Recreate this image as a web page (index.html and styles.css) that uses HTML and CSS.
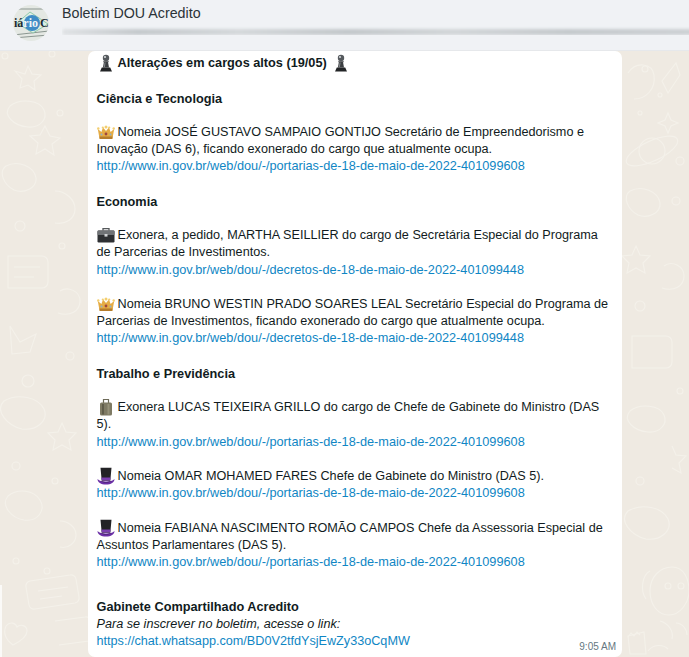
FILE: index.html
```html
<!DOCTYPE html>
<html lang="pt">
<head>
<meta charset="utf-8">
<title>Boletim DOU Acredito</title>
<link rel="stylesheet" href="styles.css">
</head>
<body>
<svg width="0" height="0" class="defs">
  <defs>
    <symbol id="pawn" viewBox="0 0 18 18">
      <circle cx="9" cy="4" r="3.200" fill="#55595d"/>
      <circle cx="8" cy="3" r="1.100" fill="#d0d4d7"/>
      <path d="M6 7.200h6l-.9 1.200.9 5.100H5.900l.9-5.100z" fill="#3c3f42"/>
      <path d="M7.600 8.500h1l-.7 4.500H6.700z" fill="#83878a"/>
      <path d="M4.800 13.500h8.400l1.800 4H3z" fill="#222426"/>
    </symbol>
    <symbol id="crown" viewBox="0 0 18 18">
      <path d="M.8 6l3.600 3L6 4.500 9 8l3-3.500L13.600 9l3.600-3-1.800 10H2.600z" fill="#e5ac45"/>
      <path d="M2.400 13.500h13.200l-.4 2.500H2.800z" fill="#b57d2c"/>
      <circle cx="9" cy="4" r="1.500" fill="#f3cf71"/>
      <circle cx="1.300" cy="5.500" r="1.200" fill="#f3cf71"/>
      <circle cx="16.700" cy="5.500" r="1.200" fill="#f3cf71"/>
      <circle cx="5.800" cy="4.500" r="1.100" fill="#f3cf71"/>
      <circle cx="12.200" cy="4.500" r="1.100" fill="#f3cf71"/>
      <circle cx="9" cy="11" r="1.400" fill="#a0463c"/>
      <circle cx="4.500" cy="11.500" r="1" fill="#8fb2c9"/>
      <circle cx="13.500" cy="11.500" r="1" fill="#8fb2c9"/>
    </symbol>
    <symbol id="case" viewBox="0 0 18 18">
      <path d="M6 4.500V2.600h6v1.900" fill="none" stroke="#55585b" stroke-width="1.300"/>
      <rect x="0.500" y="4.500" width="17" height="12" rx="1.200" fill="#2e3033"/>
      <rect x="0.500" y="4.500" width="17" height="4.500" rx="1" fill="#707376"/>
      <rect x="7.500" y="8" width="3" height="2.600" fill="#d2d4d6"/>
    </symbol>
    <symbol id="bag" viewBox="0 0 18 18">
      <path d="M6.500 5V1.500h5V5" fill="none" stroke="#6d6a58" stroke-width="1.200"/>
      <rect x="3" y="4.500" width="12" height="13" rx="1.500" fill="#7e7a64"/>
      <rect x="5" y="6" width="2" height="10.500" fill="#5f5c4a"/>
      <rect x="10.500" y="6" width="2" height="10.500" fill="#96927a"/>
    </symbol>
    <symbol id="hat" viewBox="0 0 18 18">
      <path d="M3.500 .8h11l-1.200 13H4.700z" fill="#232326"/>
      <path d="M4.400 10.500h9.200l-.3 3H4.700z" fill="#7b3fb0"/>
      <path d="M.5 12c2 2 4.500 2.400 8.500 2.400s6.500-.4 8.500-2.400c0 3.500-3.500 5.500-8.500 5.500S.5 15.500.5 12z" fill="#6b2fa6"/>
      <path d="M3.500 14c1.500.7 3.500 1 5.500 1s4-.3 5.500-1c-1 1.700-10 1.700-11 0z" fill="#16161a"/>
    </symbol>
  </defs>
</svg>

<header class="topbar">
  <svg class="avatar" viewBox="0 0 36 36" aria-hidden="true">
    <defs><clipPath id="avclip"><circle cx="18" cy="18" r="18"/></clipPath></defs>
    <g clip-path="url(#avclip)">
      <rect width="36" height="36" fill="#e4e8e3"/>
      <path d="M0 4h36M0 30l36-4M0 33l36-3" stroke="#8b9690" stroke-width="1"/>
      <path d="M17 7L35 19 20 28 4 18z" fill="#dfeee4" stroke="#7cc09d" stroke-width=".8"/>
      <circle cx="19" cy="18" r="8" fill="#3f8cc6"/>
      <text x="1" y="22" class="avatar-text">iá<tspan class="avatar-blue">rio</tspan></text>
      <text x="27" y="22" class="avatar-text">C</text>
    </g>
  </svg>
  <div class="topbar-text">
    <div class="chat-name">Boletim DOU Acredito</div>
    <div class="smudge"></div>
  </div>
</header>

<main class="chat">
  <svg class="doodles" viewBox="0 0 689 606" aria-hidden="true">
    <g fill="none" stroke="#f4f1ea" stroke-width="1.100">
      <path d="M15 20l7 8-2 9 8-3 7 5-1-9 7-6-9-1-4-8-3 8z"/>
      <circle cx="5" cy="5" r="3"/><circle cx="52" cy="3" r="3"/><circle cx="60" cy="62" r="3"/>
      <path d="M10 55c10-8 30-6 34 4 4 9-4 18-16 17-14-1-26-12-18-21z"/>
      <path d="M45 75l5 10 10 2-8 6 2 11-9-6-9 5 2-11-8-7 10-1z"/>
      <path d="M6 115c12-6 28 0 30 12 1 10-12 16-22 12-10-5-16-18-8-24z"/>
      <path d="M55 140c10 0 20 8 20 18s-10 16-20 14"/>
      <circle cx="20" cy="175" r="5"/><circle cx="62" cy="195" r="3"/>
      <path d="M8 205h34a6 6 0 0 1 6 6v20a6 6 0 0 1-6 6H8z"/>
      <path d="M14 216h26M14 226h20"/>
      <path d="M60 240c8-5 20 0 20 10s-10 16-22 12"/>
      <path d="M10 275l10 16 16-8-6 18-18 2z"/>
      <circle cx="70" cy="305" r="4"/><circle cx="28" cy="330" r="6"/>
      <path d="M4 350c14-8 34-4 40 8 5 12-8 22-22 20-14-3-28-18-18-28z"/>
      <path d="M62 372l4 9 10 1-7 7 2 10-9-5-9 5 2-10-7-7 10-1z"/>
      <circle cx="16" cy="415" r="4"/><circle cx="55" cy="430" r="3"/>
      <path d="M8 445c10-8 26-6 32 4s-2 22-16 20c-12-2-24-14-16-24z"/>
      <path d="M60 470c8 0 16 6 16 14s-8 14-16 12"/>
      <circle cx="16" cy="510" r="3"/><circle cx="47" cy="520" r="3"/>
      <path d="M30 530l40-6a5 5 0 0 1 6 4l3 18a5 5 0 0 1-4 6l-40 6a5 5 0 0 1-6-4l-3-18a5 5 0 0 1 4-6z"/>
      <path d="M38 540l30-4M40 548l22-3"/>
      <path d="M6 575c4-5 10-3 11 1 3-3 10-2 10 4 0 7-10 12-14 14-4-3-11-10-7-19z"/>
      <path d="M55 570l30-4a5 5 0 0 1 6 4l2 14a5 5 0 0 1-4 6l-30 4"/>

      <path d="M628 22c8-12 24-10 26 2 2 14-8 24-20 24"/>
      <path d="M662 30l14-18 4 12-12 18z"/><circle cx="645" cy="18" r="3"/><circle cx="660" cy="44" r="2"/>
      <path d="M668 62l3 7 7 3-7 3-3 7-3-7-7-3 7-3z"/>
      <ellipse cx="652" cy="100" rx="28" ry="10" transform="rotate(-25 652 100)"/>
      <circle cx="652" cy="100" r="13"/><circle cx="640" cy="62" r="2"/><circle cx="680" cy="110" r="4"/>
      <path d="M630 140c12-6 28 0 30 12 1 10-12 16-22 12-10-5-16-18-8-24z"/>
      <circle cx="676" cy="150" r="4"/>
      <path d="M636 195l4 9 10 1-7 7 2 10-9-5-9 5 2-10-7-7 10-1z"/>
      <path d="M664 215c8-6 20 0 20 10s-10 16-22 12"/>
      <circle cx="640" cy="255" r="5"/>
      <path d="M632 285h34a6 6 0 0 1 6 6v20a6 6 0 0 1-6 6h-34z"/>
      <circle cx="680" cy="340" r="3"/>
      <path d="M630 360c10-8 30-6 34 4 4 9-4 18-16 17-14-1-26-12-18-21z"/>
      <path d="M672 395l4 9 10 1-7 7 2 10-9-5"/>
      <circle cx="640" cy="430" r="4"/>
      <path d="M628 460c14-8 34-4 40 8 5 12-8 22-22 20-14-3-28-18-18-28z"/>
      <path d="M650 540c0-14 10-24 22-24s17 12 17 24-9 24-20 24-19-10-19-24z"/>
      <circle cx="668" cy="535" r="3"/><circle cx="681" cy="535" r="3"/>
      <path d="M650 520c-8 4-10 20-4 28"/>
      <path d="M628 585l16-4 2 22h-16z"/><path d="M628 586l3-4 3 3 3-4 3 3"/>
      <path d="M660 570c8 2 14 10 12 18M676 572c6 0 11 6 11 12"/>
      <path d="M648 600c5-7 15-7 20-2"/>
    </g>
  </svg>
  <div class="edge"></div>

  <article class="bubble">
    <p class="title"><svg class="emoji"><use href="#pawn"/></svg><b>Alterações em cargos altos (19/05)</b><svg class="emoji after"><use href="#pawn"/></svg></p>

    <h2 class="section">Ciência e Tecnologia</h2>

    <p class="item"><svg class="emoji"><use href="#crown"/></svg>Nomeia JOSÉ GUSTAVO SAMPAIO GONTIJO Secretário de Empreendedorismo e Inovação (DAS 6), ficando exonerado do cargo que atualmente ocupa.<br><a href="#">http://www.in.gov.br/web/dou/-/portarias-de-18-de-maio-de-2022-401099608</a></p>

    <h2 class="section">Economia</h2>

    <p class="item"><svg class="emoji"><use href="#case"/></svg>Exonera, a pedido, MARTHA SEILLIER do cargo de Secretária Especial do Programa de Parcerias de Investimentos.<br><a href="#">http://www.in.gov.br/web/dou/-/decretos-de-18-de-maio-de-2022-401099448</a></p>

    <p class="item"><svg class="emoji"><use href="#crown"/></svg>Nomeia BRUNO WESTIN PRADO SOARES LEAL Secretário Especial do Programa de Parcerias de Investimentos, ficando exonerado do cargo que atualmente ocupa.<br><a href="#">http://www.in.gov.br/web/dou/-/decretos-de-18-de-maio-de-2022-401099448</a></p>

    <h2 class="section">Trabalho e Previdência</h2>

    <p class="item"><svg class="emoji"><use href="#bag"/></svg>Exonera LUCAS TEIXEIRA GRILLO do cargo de Chefe de Gabinete do Ministro (DAS 5).<br><a href="#">http://www.in.gov.br/web/dou/-/portarias-de-18-de-maio-de-2022-401099608</a></p>

    <p class="item"><svg class="emoji"><use href="#hat"/></svg>Nomeia OMAR MOHAMED FARES Chefe de Gabinete do Ministro (DAS 5).<br><a href="#">http://www.in.gov.br/web/dou/-/portarias-de-18-de-maio-de-2022-401099608</a></p>

    <p class="item"><svg class="emoji"><use href="#hat"/></svg>Nomeia FABIANA NASCIMENTO ROMÃO CAMPOS Chefe da Assessoria Especial de Assuntos Parlamentares (DAS 5).<br><a href="#">http://www.in.gov.br/web/dou/-/portarias-de-18-de-maio-de-2022-401099608</a></p>

    <footer class="signup">
      <b>Gabinete Compartilhado Acredito</b><br>
      <i>Para se inscrever no boletim, acesse o link:</i><br>
      <a href="#" class="invite">https://chat.whatsapp.com/BD0V2tfdYsjEwZy33oCqMW</a>
    </footer>
    <time class="stamp">9:05 AM</time>
  </article>
</main>
</body>
</html>
```
FILE: styles.css
```css
* { box-sizing: border-box; }
html, body { margin: 0; height: 657px; overflow: hidden; }
body {
  font-family: "Liberation Sans", Arial, sans-serif;
  background: #efeae2;
  color: #111b21;
  display: flex;
  flex-direction: column;
}
.defs { position: absolute; }

.topbar {
  height: 51px;
  flex: none;
  background: #f0f2f5;
  border-bottom: 1px solid #e6e8eb;
  display: flex;
  align-items: flex-start;
  padding: 5px 0 0 13px;
  gap: 13px;
}
.avatar { width: 36px; height: 36px; flex: none; }
.avatar-text {
  font-family: "Liberation Serif", serif;
  font-size: 12px;
  font-weight: 700;
  fill: #1c2a33;
}
.avatar-blue { fill: #f2f6f8; }
.topbar-text { flex: 1; min-width: 0; overflow: hidden; }
.chat-name { font-size: 14.25px; line-height: 17px; color: #2b3338; }
.smudge {
  height: 6px;
  margin: 7px -6px 0 0;
  background: linear-gradient(90deg, #dfe2e4, #c4c9cc 12%, #d4d8da 28%, #c2c7ca 45%, #d2d6d8 62%, #c4c9cc 80%, #cdd1d4);
  border-radius: 3px;
  filter: blur(1.4px);
}

.chat {
  position: relative;
  flex: 1;
  min-height: 0;
  padding-left: 88px;
  overflow: hidden;
}
.doodles { position: absolute; left: 0; top: 0; width: 689px; height: 606px; }
.edge { position: absolute; left: 0; top: 534px; bottom: 0; width: 2px; background: #fbfaf8; }

.bubble {
  position: relative;
  width: 534px;
  height: 606px;
  background: #fff;
  border-radius: 7px;
  padding: 4.300px 8.500px 0;
  font-size: 12.65px;
  line-height: 17.2px;
}
.bubble p, .bubble h2 { margin: 0 0 17.2px; }
.bubble b { font-size: 12.72px; line-height: 1; }
.section { font-size: 12.72px; font-weight: 700; line-height: 17.2px; }
.emoji {
  display: inline-block;
  width: 18px;
  height: 18px;
  vertical-align: -1px;
  margin: -4px 3px -4px 0;
}
.emoji.after { margin: -4px 0 -4px 5px; }
a { color: #0f86c4; text-decoration: none; font-size: 12.72px; line-height: 1; }
a.invite { font-size: 12.65px; }
.signup { margin-top: 27.300px; }
.stamp {
  position: absolute;
  right: 6px;
  bottom: 4px;
  font-size: 10px;
  line-height: 12px;
  color: #667781;
}
```
